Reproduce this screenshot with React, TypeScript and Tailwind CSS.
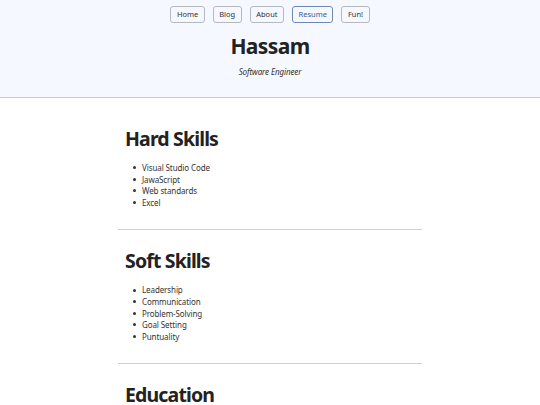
import React from "react";

const nav = ["Home", "Blog", "About", "Resume", "Fun!"];

function Section({ title, items, first, last }: { title: string; items: string[]; first?: boolean; last?: boolean }) {
  return (
    <section className={`${last ? "" : "border-b border-[#cfcfd4]"} ${first ? "pt-[26px]" : "pt-[16px]"} pb-[21px]`}>
      <h2 className="pl-[7px] text-[19.5px] leading-[30px] font-bold tracking-[-0.85px] text-[#222]">{title}</h2>
      <ul className="mt-[8px] pl-[15px] text-[8px] leading-[11.6px] tracking-[-0.1px] text-[#333]">
        {items.map((i) => (
          <li key={i} className="flex items-center gap-[6px]">
            <span className="w-[3px] h-[3px] rounded-full bg-[#333] shrink-0" />
            <span>{i}</span>
          </li>
        ))}
      </ul>
    </section>
  );
}

export default function App() {
  return (
    <div className="h-[405px] overflow-hidden bg-white" style={{ fontFamily: '"Noto Sans", "Open Sans", sans-serif' }}>
      <header className="h-[98px] bg-[#f5f8ff] border-b border-[#c9c9d1] flex flex-col items-center">
        <nav className="flex gap-[8px] pt-[6px]">
          {nav.map((n) => (
            <button
              key={n}
              className={`h-[17px] px-[5.5px] rounded-[3px] border text-[7.5px] leading-none ${
                n === "Resume" ? "border-[#6f88b8] text-[#3d5a94]" : "border-[#b5b8bf] text-[#333]"
              }`}
            >
              {n}
            </button>
          ))}
        </nav>
        <h1 className="mt-[8px] text-[21px] leading-[30px] font-bold tracking-[-0.6px] text-[#222]">Hassam</h1>
        <p className="mt-[5px] text-[8px] italic tracking-[-0.1px] text-[#333]">Software Engineer</p>
      </header>
      <main className="w-[304px] mx-auto">
        <Section first title="Hard Skills" items={["Visual Studio Code", "JawaScript", "Web standards", "Excel"]} />
        <Section title="Soft Skills" items={["Leadership", "Communication", "Problem-Solving", "Goal Setting", "Puntuality"]} />
        <Section last title="Education" items={[]} />
      </main>
    </div>
  );
}
